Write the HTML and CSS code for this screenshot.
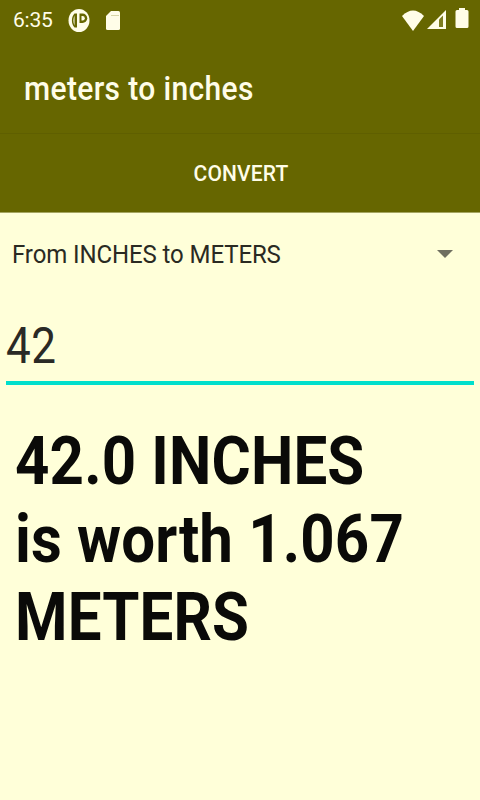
FILE: index.html
```html
<!DOCTYPE html>
<html>
<head>
    <meta charset="utf-8">
    <title>meters to inches</title>
    <link rel="stylesheet" href="styles.css">
</head>
<body>
    <div class="statusBar">
        <span class="time">6:35</span>
        <svg class="icon" width="22" height="23" viewBox="0 0 22 23">
            <ellipse cx="11" cy="11.500" rx="10.500" ry="11.500" fill="#fffde8"/>
            <path d="M6.500 4.500C3 8 3 15 6.500 18.500H9V4.500z" fill="#666600"/>
            <path d="M6.500 6.500C5 9.500 5 13.500 6.500 16.500z" fill="#fffde8"/>
            <path d="M11.500 4.500h3a4.750 4.750 0 0 1 0 9.500h-3z" fill="#666600"/>
            <path d="M13.500 7h1a2.300 2.300 0 0 1 0 4.600h-1z" fill="#fffde8"/>
        </svg>
        <svg class="icon sd" width="16" height="21" viewBox="0 0 16 21">
            <path d="M6 1h7.500a1.500 1.500 0 0 1 1.500 1.500v16a1.500 1.500 0 0 1-1.500 1.500h-11A1.500 1.500 0 0 1 1 18.500V6z" fill="#fffde8"/>
            <rect x="6" y="5" width="8" height="1" fill="#d8d6a8"/>
        </svg>
        <div class="statusRight">
            <svg width="22" height="21" viewBox="0 0 22 21">
                <path d="M0 6Q11 -5 22 6L11 21z" fill="#fffde8"/>
            </svg>
            <svg class="signal" width="20" height="20" viewBox="0 0 20 20">
                <path d="M0 19L19 0V19z" fill="#fffde8"/>
                <path d="M12 9.500L16 5.500V17H12z" fill="#7d7d20"/>
            </svg>
            <svg class="battery" width="14" height="22" viewBox="0 0 14 22">
                <path d="M4 3V1h6v2h2a1.500 1.500 0 0 1 1.500 1.500v15A1.500 1.500 0 0 1 12 21H2a1.500 1.500 0 0 1-1.500-1.500v-15A1.500 1.500 0 0 1 2 3z" fill="#fffde8"/>
            </svg>
        </div>
    </div>

    <div class="titleBar"><span class="tall">meters to inches</span></div>
    <div class="convert"><span class="tall">CONVERT</span></div>

    <div class="spinner">
        <span class="tall">From INCHES to METERS</span>
        <div class="arrow"></div>
    </div>

    <div class="input">
        <div class="inputText">42</div>
    </div>

    <div class="result">42.0 INCHES<br>is worth 1.067<br>METERS</div>
</body>
</html>
```

FILE: styles.css
```css
* {box-sizing: border-box;}
html, body {margin: 0; height: 800px; overflow: hidden;}
body {background-color: #ffffd9; font-family: Roboto, "Liberation Sans", sans-serif;}

/* the reference text is a bit stretched vertically */
.tall {display: inline-block; transform: scaleY(1.08);}

.statusBar {
    align-items: center;
    background-color: #666600;
    color: #fffde8;
    display: flex;
    height: 40px;
    padding: 0 11px 0 13px;
}
.statusBar .time {font-size: 21px; letter-spacing: -0.2px; margin-right: 15px;}
.statusBar .sd {margin-left: 15px;}
.statusRight {align-items: center; display: flex; margin-left: auto;}
.statusRight .signal {margin-left: 3px;}
.statusRight .battery {margin: 0 0 4px 8px;}

.titleBar {
    align-items: center;
    background-color: #666600;
    border-bottom: 1px solid #5f5f00;
    color: #fffde8;
    display: flex;
    font-size: 30px;
    font-weight: 500;
    height: 94px;
    letter-spacing: 0.35px;
    padding: 4px 0 0 24px;
}
.convert {
    align-items: center;
    background-color: #666600;
    border-bottom: 1px solid #a5a560;
    color: #fffde8;
    display: flex;
    font-size: 21px;
    font-weight: 500;
    height: 79px;
    justify-content: center;
    letter-spacing: 0.15px;
    padding-left: 2px;
}

.spinner {
    align-items: center;
    color: #2a2a22;
    display: flex;
    font-size: 24px;
    height: 84px;
    justify-content: space-between;
    letter-spacing: -0.1px;
    padding: 0 27px 2px 12px;
}
.spinner .arrow {
    border-left: 8px solid transparent;
    border-right: 8px solid transparent;
    border-top: 8px solid #6f6f60;
}

.input {margin: 0 6px; height: 88px; border-bottom: 4px solid #00dfcc;}
.inputText {
    color: #2a2a26;
    font-size: 44px;
    height: 84px;
    letter-spacing: 0.4px;
    line-height: 84px;
    padding-top: 6px;
    transform: scaleY(1.15);
}

.result {
    color: #0a0a08;
    font-size: 60px;
    font-weight: 700;
    letter-spacing: 0.15px;
    line-height: 71px;
    margin: 37px 16px 0 15px;
    transform: scaleY(1.1);
    transform-origin: top left;
}
```
